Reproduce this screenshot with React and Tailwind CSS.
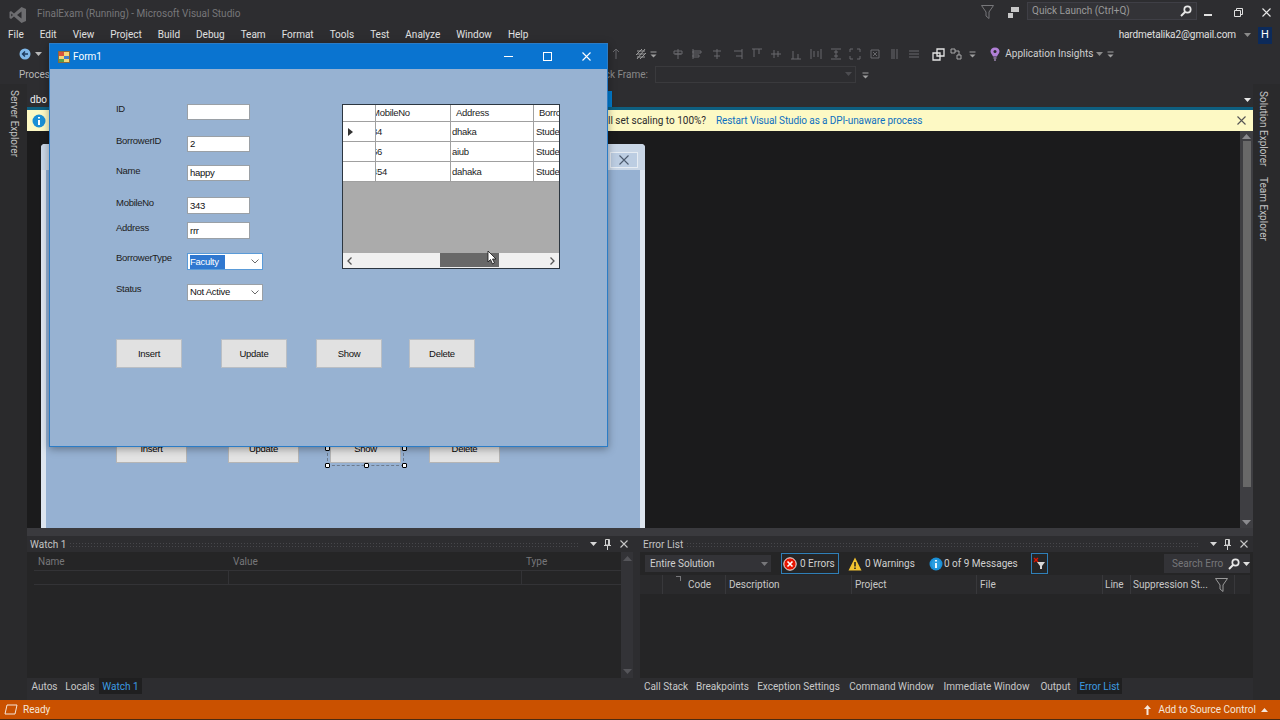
import React from "react";

const Ico = ({ w = 12, h = 12, children, className = "" }) => (
  <svg width={w} height={h} viewBox={`0 0 ${w} ${h}`} fill="none" className={"shrink-0 " + className}>{children}</svg>
);

const Caret = ({ c = "#b8b8b8", className = "" }) => (
  <Ico w={7} h={4} className={className}><path d="M0 0H7L3.5 4Z" fill={c} /></Ico>
);

const Overflow = ({ className = "" }) => (
  <Ico w={7} h={7} className={className}><path d="M0.5 1H6.5" stroke="#a0a0a0" /><path d="M0.5 3.5H6.5L3.5 6.5Z" fill="#a0a0a0" /></Ico>
);

const CloseX = ({ c = "#c8c8c8", s = 8 }) => (
  <Ico w={s} h={s}><path d={`M0.5 0.5L${s - 0.5} ${s - 0.5}M${s - 0.5} 0.5L0.5 ${s - 0.5}`} stroke={c} strokeWidth="1.1" /></Ico>
);

const Pin = () => (
  <Ico w={7} h={11}><path d="M1.5 0.5H5.5V6H1.5ZM0 6.5H7M3.5 7V11M4.5 1V6" stroke="#d0d0d0" /></Ico>
);

const Search = () => (
  <Ico w={12} h={12}><circle cx="7.5" cy="4.5" r="3.2" stroke="#e8e8e8" strokeWidth="1.7" /><path d="M5 7L1 11" stroke="#e8e8e8" strokeWidth="2" /></Ico>
);

const Funnel = ({ c = "#9a9a9a" }) => (
  <Ico w={13} h={14}><path d="M0.5 0.5H12.5L8 7V13.5L5 11V7Z" stroke={c} /></Ico>
);

const PanelHead = ({ title }) => (
  <div className="h-4 flex items-center pl-[3px] pr-[5px] gap-[3px] bg-[#2d2d30]">
    <span className="text-[#c4c4c4] pt-[2px]">{title}</span>
    <div className="flex-1 h-[5px] bg-[radial-gradient(#47474b_1px,transparent_1px)] bg-[length:3px_3px]" />
    <Caret c="#d8d8d8" className="ml-2" />
    <div className="ml-[4px]"><Pin /></div>
    <div className="ml-[6px]"><CloseX /></div>
  </div>
);

const dis = "#68686c";
const AlignIcon = ({ d, c = dis }) => (
  <Ico w={12} h={12}><path d={d} stroke={c} /></Ico>
);

const toolbarIcons = [
  ["M6 1V11M3 4L6 1L9 4", dis],
  ["M2 11L10 1M1 7L7 1M5 11L11 5M2 3H10M2 6H10M2 9H10", "#9a9a9a"],
  ["M6 1V11M2 3H10V6H2ZM3 6H9", dis],
  ["M1 1V11M1 3H9V5H1ZM1 7H7V9H1Z", dis],
  ["M6 1V11M2 3H10M3 8H9", dis],
  ["M11 1V11M3 3H11M5 8H11", dis],
  ["M1 1H11M3 1V9M8 1V6", dis],
  ["M1 6H11M4 2V10M8 3V9", dis],
  ["M1 11H11M3 3V11M8 6V11", dis],
  ["M1 1V11M11 1V11M4 3V9M8 3V9", dis],
  ["M1 1H11M1 11H11M6 2V10M4 4H8M4 8H8", dis],
  ["M1 4V1H4M8 1H11V4M1 8V11H4M8 11H11V8", dis],
  ["M2 2H10V10H2ZM4 4L8 8M8 4L4 8", dis],
  ["M3 1V11M5 1V11M8 1V11", dis],
  ["M1 3H11M1 6H11M1 9H11", dis],
];

const Toolbar1 = () => (
  <div className="h-5 flex items-center bg-[#2d2d30]">
    <div className="w-[19px]" />
    <Ico w={12} h={12}><circle cx="6" cy="6" r="5.5" fill="#7fb7e8" /><path d="M9 6H3.5M6 3.5L3.5 6L6 8.5" stroke="#1d3a5c" strokeWidth="1.4" /></Ico>
    <Caret className="ml-[4px]" />
    <div className="w-[568px]" />
    <div className="flex items-center gap-[13px]">
      {toolbarIcons.slice(0, 2).map((t, i) => <AlignIcon key={i} d={t[0]} c={t[1]} />)}
    </div>
    <Overflow className="ml-[3px]" />
    <div className="ml-[15px] flex items-center gap-[7.7px]">
      {toolbarIcons.slice(2).map((t, i) => <AlignIcon key={i} d={t[0]} c={t[1]} />)}
    </div>
    <div className="ml-[12px]">
      <Ico w={13} h={13}><path d="M5 1H12V8H5ZM1 5H8V12H1Z" stroke="#e4e4e4" strokeWidth="1.3" /></Ico>
    </div>
    <div className="ml-[5px]">
      <Ico w={12} h={12}><path d="M1 1H5V5H1ZM7 7H11V11H7ZM5 3H9V7" stroke="#a8a8a8" /></Ico>
    </div>
    <Overflow className="ml-[7px]" />
    <div className="ml-[14px]">
      <Ico w={10} h={14}><path d="M5 0.5C8 0.5 9.5 2.5 9.5 4.5C9.5 6.5 7.5 7.5 7 9.5H3C2.5 7.5 0.5 6.5 0.5 4.5C0.5 2.5 2 0.5 5 0.5Z" fill="#b180d7" /><path d="M3.5 11H6.5M4 13H6" stroke="#d0b0ea" /><circle cx="5" cy="4.5" r="1.5" fill="#2d2d30" /></Ico>
    </div>
    <span className="ml-[5px] text-[#d0d0d0]">Application Insights</span>
    <Caret c="#8a8a8a" className="ml-[3px]" />
    <Overflow className="ml-[4px]" />
  </div>
);

const Toolbar2 = () => (
  <div className="h-5 flex items-center bg-[#2d2d30] text-[#8a8a8a]">
    <span className="ml-[19px] w-[571px] text-[#b8b8b8] pt-[1px]">Process:</span>
    <span className="w-[65px] pt-[1px]">Stack Frame:</span>
    <div className="w-[201px] h-[17px] border border-[#3a3a3d] flex items-center justify-end pr-[3px]">
      <Caret c="#4c4c50" />
    </div>
    <Overflow className="ml-[6px] mt-[2px]" />
  </div>
);

const Rail = ({ labels, cls }) => (
  <div className={"w-[27px] shrink-0 bg-[#2a2a2c] flex flex-col " + cls}>
    {labels.map((l) => (
      <span key={l} className="[writing-mode:vertical-rl] text-[#c4c4c4] leading-none">{l}</span>
    ))}
  </div>
);

const DesignerBtn = ({ label, ml, selected }) => (
  <div className={"relative w-[71px] h-[26px] bg-[#e3e3e3] border-b border-[#b5b5b5] border-x flex items-center justify-center text-black pb-[1px] font-['Liberation_Sans',sans-serif] text-[9.5px] tracking-[-0.03em] " + ml}>
    {label}
    {selected && <>
      <div className="absolute left-[-4px] right-[-4px] top-[-4px] bottom-[-4px] border border-dashed border-[#6d7b8d]" />
      {["left-[-6px] top-[9px]", "right-[-7px] top-[9px]", "left-[-6px] top-[26px]", "left-[33px] top-[26px]", "right-[-7px] top-[26px]"].map((p) => (
        <div key={p} className={"absolute w-[5px] h-[5px] rounded-[1px] bg-white border border-black " + p} />
      ))}
    </>}
  </div>
);

const Designer = () => (
  <div className="ml-[14px] w-[604px] mt-[13px] flex-1 flex flex-col rounded-t-[4px] bg-[#dde5ef] overflow-hidden">
    <div className="h-[26px] flex justify-end items-start pt-[8px] pr-[7px] shrink-0 bg-[#c9d6e6]">
      <div className="w-[28px] h-[16px] bg-[#bccde2] border border-[#e6ecf3] flex items-center justify-center">
        <CloseX c="#4d5b6e" s={10} />
      </div>
    </div>
    <div className="flex-1 ml-[5px] mr-[5px] bg-[#96b1d2] pl-[70px] pt-[267px] flex items-start">
      <DesignerBtn label="Insert" ml="" />
      <DesignerBtn label="Update" ml="ml-[41px]" />
      <DesignerBtn label="Show" ml="ml-[31px]" selected />
      <DesignerBtn label="Delete" ml="ml-[28px]" />
    </div>
  </div>
);

const Scrollbar = () => (
  <div className="w-[13px] shrink-0 bg-[#3e3e42] flex flex-col items-center py-[3px]">
    <Ico w={9} h={5}><path d="M0 5H9L4.5 0Z" fill="#8a8a8e" /></Ico>
    <div className="mt-[2px] w-[8px] h-[346px] bg-[#686868]" />
    <div className="flex-1" />
    <Ico w={9} h={5}><path d="M0 0H9L4.5 5Z" fill="#8a8a8e" /></Ico>
  </div>
);

const Doc = () => (
  <div className="h-[444px] flex flex-col shrink-0">
    <div className="h-[23px] flex items-center bg-[#2d2d30] shrink-0">
      <span className="ml-[3px] w-[577px] text-[#f0f0f0] pt-[8px]">dbo</span>
      <div className="w-[5px] h-[16px] bg-[#007acc] self-end" />
      <div className="flex-1" />
      <Caret c="#e8e8e8" className="mr-[2px] mt-[8px]" />
    </div>
    <div className="h-[24px] border-t-[3px] border-[#0e5f80] bg-[#fdf9c4] flex items-center shrink-0">
      <Ico w={14} h={14} className="ml-[5px]"><circle cx="7" cy="7" r="6.5" fill="#1a8fd6" /><path d="M7 3V4.5M7 6V11" stroke="#fff" strokeWidth="2" /></Ico>
      <span className="ml-[552px] text-[#2b2b2b] w-[118px] whitespace-nowrap">will set scaling to 100%?</span>
      <span className="text-[#0e70c0] tracking-[-0.01em]">Restart Visual Studio as a DPI-unaware process</span>
      <div className="flex-1" />
      <div className="mr-[7px]"><CloseX c="#555" s={9} /></div>
    </div>
    <div className="flex-1 flex min-h-0 bg-[#1b1b1c]">
      <div className="flex-1 flex flex-col min-w-0"><Designer /></div>
      <Scrollbar />
    </div>
  </div>
);

const WatchPanel = () => (
  <div className="w-[606px] flex flex-col bg-[#252526]">
    <PanelHead title="Watch 1" />
    <div className="flex-1 flex">
      <div className="flex-1 min-w-0 pl-[7px]">
        <div className="h-[19px] flex items-center pt-[2px] text-[#77777a] border-b border-[#333336]">
          <span className="w-[196px] pl-[4px]">Name</span>
          <span className="w-[293px] pl-[3px]">Value</span>
          <span className="pl-[3px]">Type</span>
        </div>
        <div className="h-[14px] flex border-b border-[#333336]">
          <div className="w-[195px] border-r border-[#333336]" />
          <div className="w-[293px] border-r border-[#333336]" />
        </div>
      </div>
      <div className="w-[12px] bg-[#333337] flex flex-col items-center justify-between py-[4px]">
        <Ico w={9} h={5}><path d="M0 5H9L4.5 0Z" fill="#55555a" /></Ico>
        <Ico w={9} h={5}><path d="M0 0H9L4.5 5Z" fill="#55555a" /></Ico>
      </div>
    </div>
  </div>
);

const ErrIcon = () => (
  <Ico w={14} h={14}><circle cx="7" cy="7" r="6.2" fill="#e51400" stroke="#f5f5f5" strokeWidth="1" /><path d="M4.5 4.5L9.5 9.5M9.5 4.5L4.5 9.5" stroke="#fff" strokeWidth="1.6" /></Ico>
);
const WarnIcon = () => (
  <Ico w={14} h={14}><path d="M7 0.5L13.5 13.5H0.5Z" fill="#f4c430" /><path d="M7 5V9.5M7 10.5V12" stroke="#1e1e1e" strokeWidth="1.5" /></Ico>
);
const InfoIcon = () => (
  <Ico w={14} h={14}><circle cx="7" cy="7" r="6.5" fill="#1a8fd6" /><circle cx="7" cy="7" r="4.5" fill="#2a9ee0" /><path d="M7 3V4.5M7 6V11" stroke="#fff" strokeWidth="1.8" /></Ico>
);

const ErrorPanel = () => (
  <div className="w-[613px] ml-[7px] flex flex-col bg-[#252526]">
    <PanelHead title="Error List" />
    <div className="h-[23px] flex items-center text-[#d0d0d0] pl-[5px] whitespace-nowrap">
      <div className="w-[126px] h-[17px] bg-[#333337] flex items-center justify-between pl-[5px] pr-[3px]">
        <span>Entire Solution</span><Caret c="#77777a" />
      </div>
      <div className="ml-[10px] w-[58px] h-[21px] border border-[#2f7fb8] flex items-center gap-[3px] pl-[1px]"><ErrIcon />0 Errors</div>
      <div className="ml-[9px] w-[69px] flex items-center gap-[3px]"><WarnIcon />0 Warnings</div>
      <div className="ml-[12px] w-[90px] flex items-center gap-[1px]"><InfoIcon />0 of 9 Messages</div>
      <div className="ml-[12px] w-[17px] h-[21px] border border-[#2f7fb8] flex items-center justify-center">
        <Ico w={13} h={13}><path d="M1 1L5 5M5 1L1 5" stroke="#e51400" strokeWidth="1.3" /><path d="M4 5H12L9 9V12H7V9Z" fill="#d8d8d8" /></Ico>
      </div>
      <div className="ml-[116px] w-[86px] h-[19px] bg-[#333337] flex items-center pl-[8px] text-[#77777a]">
        <span className="w-[56px]">Search Erro</span>
        <Search />
        <Caret c="#e0e0e0" className="ml-[3px]" />
      </div>
    </div>
    <div className="h-[19px] flex items-center text-[#c8c8c8] bg-[#2a2a2c] mr-[3px]">
      <div className="w-[23px] h-full border-r border-[#38383b]" />
      <div className="w-[63px] h-full border-r border-[#38383b] flex items-center pl-[25px] relative">
        <span className="absolute left-[13px] top-[1px] w-[5px] h-[5px] border-t border-r border-[#77777a]" />
        Code
      </div>
      <span className="w-[126px] h-full border-r border-[#38383b] flex items-center pl-[3px]">Description</span>
      <span className="w-[125px] h-full border-r border-[#38383b] flex items-center pl-[3px]">Project</span>
      <span className="w-[126px] h-full border-r border-[#38383b] flex items-center pl-[3px]">File</span>
      <span className="w-[28px] h-full border-r border-[#38383b] flex items-center pl-[2px]">Line</span>
      <span className="w-[104px] h-full border-r border-[#38383b] flex items-center pl-[2px] justify-between pr-[6px]">
        <span>Suppression St...</span><Funnel />
      </span>
    </div>
  </div>
);

const Tab = ({ label, w, active }) => (
  <div className={"h-[16px] pt-[2px] flex items-center justify-center whitespace-nowrap " + w + " " + (active ? "bg-[#1f1f20] text-[#3d9ce0]" : "text-[#c8c8c8]")}>
    {label}
  </div>
);

const BottomTabs = () => (
  <div className="h-[22px] flex items-start bg-[#2d2d30] shrink-0">
    <div className="w-[606px] flex pl-[1px]">
      <Tab label="Autos" w="w-[33px]" />
      <Tab label="Locals" w="w-[38px]" />
      <Tab label="Watch 1" w="w-[43px]" active />
    </div>
    <div className="ml-[7px] flex">
      <Tab label="Call Stack" w="w-[52px]" />
      <Tab label="Breakpoints" w="w-[61px]" />
      <Tab label="Exception Settings" w="w-[91px]" />
      <Tab label="Command Window" w="w-[95px]" />
      <Tab label="Immediate Window" w="w-[95px]" />
      <Tab label="Output" w="w-[43px]" />
      <Tab label="Error List" w="w-[45px]" active />
    </div>
  </div>
);

const Field = ({ label, mt, inputH, w = "w-[63px]", border = "border-[#9aa0a6]", children, labelMt }) => (
  <div className={"flex items-start " + mt}>
    <span className={"w-[71px] leading-[12px] whitespace-nowrap " + labelMt}>{label}</span>
    <div className={"bg-white border flex items-center pl-[2px] text-[#111] overflow-hidden " + border + " " + inputH + " " + w}>{children}</div>
  </div>
);

const Combo = ({ children, active }) => (
  <div className="flex-1 h-full flex items-center justify-between pr-[3px]">
    <span className={"pb-[1px] " + (active ? "bg-[#3078d0] text-white pr-[6px] leading-[13px]" : "")}>{children}</span>
    <Ico w={8} h={5}><path d="M0.5 0.5L4 4L7.5 0.5" stroke="#6a6a6a" /></Ico>
  </div>
);

const GridRow = ({ a, b, arrow }) => (
  <div className="h-5 flex border-b border-[#a0a0a0]">
    <div className="w-[33px] bg-white border-r border-[#a0a0a0] flex items-center pl-[5px]">
      {arrow && <Ico w={5} h={8}><path d="M0 0L5 4L0 8Z" fill="#333" /></Ico>}
    </div>
    <div className="w-[75px] bg-white border-r border-[#a0a0a0] flex items-center overflow-hidden whitespace-nowrap">
      <span className="-ml-[4px]">{a}</span>
    </div>
    <div className="w-[83px] bg-white border-r border-[#a0a0a0] flex items-center pl-[1px]">{b}</div>
    <div className="flex-1 bg-white flex items-center pl-[2px] overflow-hidden whitespace-nowrap">Student</div>
  </div>
);

const DataGrid = () => (
  <div className="relative w-[218px] h-[165px] border border-[#2c3640] flex flex-col bg-[#ababab] overflow-hidden">
    <div className="h-[17px] flex bg-white border-b border-[#a0a0a0]">
      <div className="w-[33px] border-r border-[#a0a0a0]" />
      <div className="w-[75px] border-r border-[#a0a0a0] flex items-center overflow-hidden whitespace-nowrap"><span className="-ml-[4px]">MobileNo</span></div>
      <div className="w-[83px] border-r border-[#a0a0a0] flex items-center pl-[5px]">Address</div>
      <div className="flex-1 flex items-center pl-[5px] overflow-hidden whitespace-nowrap">Borrower</div>
    </div>
    <GridRow a="34" b="dhaka" arrow />
    <GridRow a="56" b="aiub" />
    <GridRow a="454" b="dahaka" />
    <div className="flex-1" />
    <div className="h-[15px] bg-[#f0f0f0] flex items-center justify-between px-[4px] relative">
      <Ico w={5} h={8}><path d="M4.5 0.5L1 4L4.5 7.5" stroke="#555" strokeWidth="1.3" /></Ico>
      <Ico w={5} h={8}><path d="M0.5 0.5L4 4L0.5 7.5" stroke="#555" strokeWidth="1.3" /></Ico>
      <div className="absolute left-[97px] top-0 w-[59px] h-[14px] bg-[#686868]" />
    </div>
    <div className="absolute left-[144px] top-[145px]">
      <Ico w={10} h={15}><path d="M1 1V12L3.5 9.5L5.5 14L7.5 13L5.5 9H9Z" fill="#fff" stroke="#111" strokeWidth="0.8" /></Ico>
    </div>
  </div>
);

const FormBtn = ({ label, ml = "" }) => (
  <div className={"w-[66px] h-[29px] bg-[#e1e1e1] border border-[#b9bec4] flex items-center justify-center text-[#111] " + ml}>{label}</div>
);

const Form1 = () => (
  <div className="absolute left-[49px] top-[43px] w-[559px] h-[404px] border border-[#2b7cc6] bg-[#97b2d2] flex flex-col shadow-[0_2px_8px_rgba(0,0,0,0.35)] font-['Liberation_Sans',sans-serif] text-[9.5px] tracking-[-0.03em] text-[#1c1c1c]">
    <div className="h-[25px] bg-[#0a74d0] flex items-center text-white shrink-0">
      <Ico w={12} h={12} className="ml-[8px]">
        <rect x="0.5" y="0.5" width="11" height="11" fill="#f3d77a" stroke="#8a6a3a" /><rect x="1" y="1" width="5" height="4" fill="#d8543c" /><rect x="6" y="5" width="5" height="3" fill="#3d7fd0" /><rect x="1" y="8" width="5" height="3" fill="#5aa04a" />
      </Ico>
      <span className="ml-[3px] text-[10px] tracking-normal font-['Roboto',sans-serif]">Form1</span>
      <div className="flex-1" />
      <div className="w-[9px] h-px bg-white mr-[30px]" />
      <div className="w-[9px] h-[9px] border border-white mr-[30px]" />
      <div className="mr-[16px]"><CloseX c="#fff" s={9} /></div>
    </div>
    <div className="flex-1 pl-[66px] pt-[35px] flex flex-col">
      <div className="flex items-start">
        <div className="w-[226px] flex flex-col">
          <Field label="ID" mt="" inputH="h-[16px]" labelMt="-mt-[1px]" />
          <Field label="BorrowerID" mt="mt-[16px]" inputH="h-[16px]" labelMt="-mt-[1px]">2</Field>
          <Field label="Name" mt="mt-[13px]" inputH="h-[16px]" labelMt="">happy</Field>
          <Field label="MobileNo" mt="mt-[16px]" inputH="h-[17px]" labelMt="">343</Field>
          <Field label="Address" mt="mt-[8px]" inputH="h-[17px]" labelMt="">rrr</Field>
          <Field label="BorrowerType" mt="mt-[14px]" inputH="h-[17px]" w="w-[76px]" border="border-[#5a9bd8]" labelMt="-mt-[1px]"><Combo active>Faculty</Combo></Field>
          <Field label="Status" mt="mt-[14px]" inputH="h-[17px]" w="w-[76px]" labelMt="-mt-[1px]"><Combo>Not Active</Combo></Field>
        </div>
        <DataGrid />
      </div>
      <div className="flex mt-[38px]">
        <FormBtn label="Insert" />
        <FormBtn label="Update" ml="ml-[39px]" />
        <FormBtn label="Show" ml="ml-[29px]" />
        <FormBtn label="Delete" ml="ml-[27px]" />
      </div>
    </div>
  </div>
);

export default function App() {
  return (
    <div className="relative w-[1280px] h-[720px] overflow-hidden flex flex-col bg-[#2d2d30] text-[10px] leading-[14px] font-['Roboto',sans-serif]">
      <div className="h-[26px] flex items-center shrink-0 text-[#77777a]">
        <Ico w={18} h={18} className="ml-[9px] mt-[4px]">
          <path d="M12.5 1L17 3V15L12.5 17L5 10.5L2 13L0.5 12V6L2 5L5 7.5Z" fill="#6d6d70" />
          <path d="M12.5 5.5L8 9L12.5 12.5Z" fill="#2d2d30" /><path d="M2.2 7.5L4 9L2.2 10.5Z" fill="#2d2d30" />
        </Ico>
        <span className="ml-[10px] mt-[2px]">FinalExam (Running) - Microsoft Visual Studio</span>
        <div className="flex-1" />
        <div className="-mt-[2px]"><Funnel c="#77777a" /></div>
        <div className="ml-[13px] -mt-[2px]">
          <Ico w={13} h={13}><path d="M4 1H12V6H4ZM1 7H6V12H1Z" fill="#c8c8c8" /></Ico>
        </div>
        <div className="ml-[7px] -mt-[4px] w-[170px] h-[18px] bg-[#333337] border border-[#3f3f46] flex items-center justify-between pl-[4px] pr-[4px] text-[#9a9a9a]">
          <span>Quick Launch (Ctrl+Q)</span><Search />
        </div>
        <div className="ml-[7px] w-[8px] h-[2px] bg-[#e0e0e0] mt-[3px]" />
        <div className="ml-[22px] -mt-[1px]">
          <Ico w={9} h={9}><path d="M2.5 2.5V0.5H8.5V6.5H6.5M0.5 2.5H6.5V8.5H0.5Z" stroke="#e0e0e0" /></Ico>
        </div>
        <div className="ml-[19px] mr-[9px] -mt-[1px]"><CloseX c="#e8e8e8" s={9} /></div>
      </div>
      <div className="h-[18px] flex items-center shrink-0 text-[#e0e0e0]">
        <div className="flex gap-[16px] pl-[8px]">
          {["File", "Edit", "View", "Project", "Build", "Debug", "Team", "Format", "Tools", "Test", "Analyze", "Window", "Help"].map((m) => <span key={m}>{m}</span>)}
        </div>
        <div className="flex-1" />
        <span className="tracking-[-0.01em]">hardmetalika2@gmail.com</span>
        <Caret c="#8a8a8a" className="ml-[8px]" />
        <div className="ml-[7px] mr-[8px] w-[14px] h-[17px] bg-[#0c2a5a] text-white flex items-center justify-center text-[11px]">H</div>
      </div>
      <Toolbar1 />
      <Toolbar2 />
      <div className="flex-1 flex min-h-0">
        <Rail labels={["Server Explorer"]} cls="items-center pt-[6px]" />
        <div className="flex-1 flex flex-col min-w-0">
          <Doc />
          <div className="h-[8px] bg-[#3a3a3e] shrink-0" />
          <div className="flex-1 flex min-h-0 bg-[#2d2d30]">
            <WatchPanel />
            <ErrorPanel />
          </div>
          <BottomTabs />
        </div>
        <Rail labels={["Solution Explorer", "Team Explorer"]} cls="items-start pl-[5px] pt-[7px] gap-[11px]" />
      </div>
      <div className="h-5 shrink-0 bg-[#ca5100] border-b border-[#4a2a10] flex items-center text-[#f5e6da]">
        <Ico w={14} h={11} className="ml-[4px]"><path d="M3 1H13L11 10H1Z" stroke="#f5e6da" /></Ico>
        <span className="ml-[5px]">Ready</span>
        <div className="flex-1" />
        <Ico w={7} h={10}><path d="M3.5 0L7 4H4.5V10H2.5V4H0Z" fill="#f5e6da" /></Ico>
        <span className="ml-[7px]">Add to Source Control</span>
        <Caret c="#f5e6da" className="ml-[5px] mr-[12px] rotate-180" />
      </div>
      <Form1 />
    </div>
  );
}
